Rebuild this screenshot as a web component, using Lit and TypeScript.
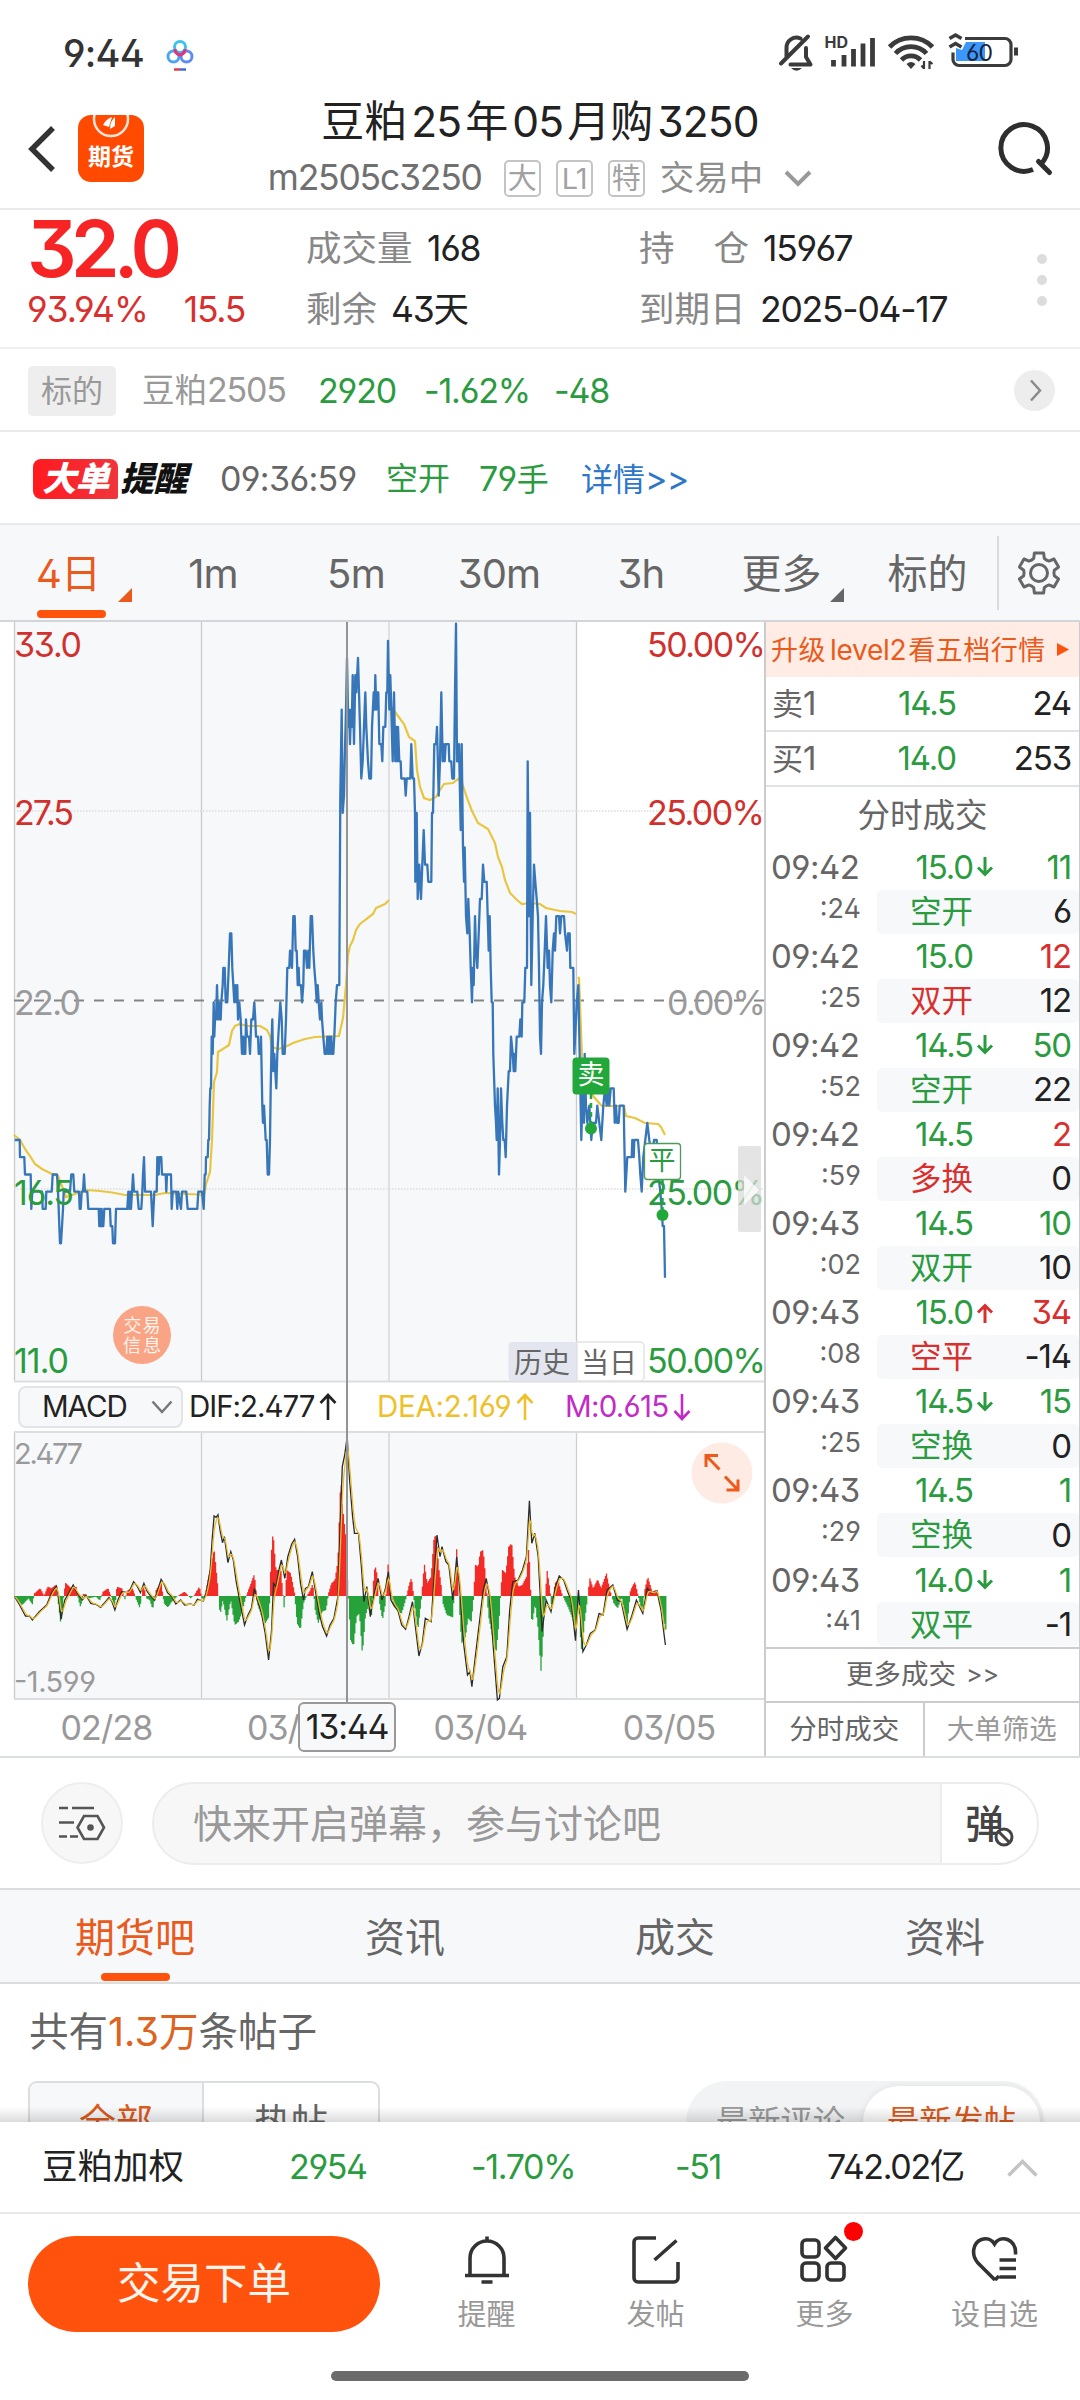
import { LitElement, html, svg, css } from "lit";
import { customElement } from "lit/decorators.js";
import { classMap } from "lit/directives/class-map.js";

/** Splits mixed text so that Latin runs and digits get their own tracking. */
const t = (s: string) =>
  s.split(/([\x20-\x7e]+)/).filter(Boolean).map((r) => (/^[\x20-\x7e]+$/.test(r) ? html`<span class="n">${r}</span>` : r));

const base = css`
  :host { display: block; box-sizing: border-box; font-family: Inter, "Noto Sans CJK SC", sans-serif; font-feature-settings: "cv09", "ss01"; line-height: 1; color: #222; white-space: nowrap; }
  * { box-sizing: border-box; }
  svg { display: block; overflow: visible; }
  .n { letter-spacing: -0.035em; }
  .red { color: #d8302f; }
  .green { color: #2b9b3f; }
  .dark { color: #222; }
`;

/* ---------- market data ---------- */

// x is in thirds of a pixel
const PRICES = `44,18 59,18 60,17.5 73,17.5 75,17 92,17 94,16 97,16.5 126,16.5 128,16 137,16 139,16.5 155,16.5 158,17 171,17 174,16.5 176,16 178,15.5 180,15 183,15 186,15.5 189,16 191,16.5 210,16.5 214,17 220,17 223,16.5 237,16.5 239,16 242,16 245,16.5 249,16.5 252,17 255,16.5 262,16.5 265,16 296,16 298,15.5 300,16 302,15.5 305,16 307,15.5 310,15.5 313,16 330,16 332,15.5 337,15.5 339,15 345,15 348,16 382,16 385,16.5 388,16 391,16.5 393,16 396,16.5 399,17 402,16.5 412,16.5 416,16 424,16 427,16.5 429,17 432,17.5 435,16.5 453,16.5 458,15.5 463,16.5 470,16.5 472,17.5 476,17 478,17.5 484,17.5 486,17 497,17 499,16.5 501,17 513,17 515,16 518,16.5 529,16.5 532,16 535,16.5 543,16 546,16.5 559,16.5 563,16 592,16 595,16.5 606,16.5 611,16 614,17 617,17 618,17.5 623,17.5 625,18 627,18 629,19 631,19.5 633,19.5 635,21 638,20.5 641,22 643,21 645,21.5 648,21.5 651,22.5 654,21.5 657,22 660,21.5 662,21.5 664,22 668,22.5 670,23 674,23 677,22 682,22 686,23 690,24 694,24 697,23 700,22.5 703,22 706,22.5 709,22 712,22.5 714,21.5 718,22 722,21.5 724,21 726,20.5 730,21 732,20.5 736,20.5 738,21.5 741,21 747,21 750,20.5 754,21.5 759,21.5 763,22 766,21.5 768,21 774,21 776,20.5 781,20.5 783,21 787,19 789,18.5 792,19 797,18 800,18 803,17 807,17 810,18 812,19.5 815,21 817,21.5 820,20 823,20.5 826,20 829,19.5 832,20.5 835,21 841,22 845,21.5 848,20.5 854,20.5 858,21.5 862,23 868,23 870,23.5 876,23 880,24.5 884,24.5 887,23.5 890,23.5 893,22.5 896,23 898,22.5 903,22.5 906,22 910,22.5 912,23.5 917,23.5 921,23 925,23.5 928,23 932,24.5 936,24.5 940,23.5 943,23 947,22.5 950,22 953,22.5 956,22 960,21.5 964,22 966,21.5 970,21 974,20.5 979,20.5 982,21 985,20.5 988,21 991,20.5 994,21 997,20.5 1000,20.5 1003,21 1007,22 1011,22.5 1018,22.5 1021,28 1025,30.5 1028,27.5 1032,28 1034,29 1038,30.5 1041,32 1045,30 1047,30.5 1050,29.5 1053,30.5 1055,30 1058,31.5 1062,29.5 1066,31.5 1069,31 1074,32 1077,31 1080,30 1084,28.5 1088,29 1092,30 1096,31 1099,30 1104,29 1108,28.5 1113,28.5 1116,30 1121,31 1124,30.5 1126,31.5 1129,30.5 1132,31 1135,31 1138,29.5 1144,29.5 1147,29 1150,30 1156,30 1159,31 1162,31 1164,32.5 1168,30.5 1171,31.5 1174,30.5 1178,29 1182,31 1186,29 1189,30 1192,29 1194,30 1198,29 1202,29 1204,28.5 1214,28.5 1217,28 1220,28.5 1231,28.5 1234,29.5 1238,28.5 1242,28.5 1245,27.5 1246,25.5 1250,27.5 1253,25 1258,26 1263,25 1267,26 1271,27 1275,26 1282,26 1285,25.5 1294,25.5 1296,27.5 1299,27.5 1303,29.5 1308,29.5 1311,30 1316,28 1320,29 1324,31 1328,29 1331,29.5 1334,29 1337,29.5 1346,29.5 1348,29 1354,29 1357,28.5 1362,28.5 1365,31 1368,33 1371,29 1374,29 1377,29.5 1382,27 1385,29.5 1389,26.5 1392,25.5 1394,26.5 1398,24.5 1402,24 1405,25 1409,24 1412,23 1416,22 1418,23 1421,22.5 1425,24.5 1428,23.5 1432,23 1436,24 1440,25 1445,25 1449,26 1453,25.5 1460,25.5 1463,24.5 1466,23.5 1469,24.5 1472,23 1475,22 1478,22 1480,20.5 1485,19 1488,18.5 1490,18 1493,19.5 1497,17 1500,18 1503,19.5 1507,18.5 1510,18 1514,18 1517,17.5 1521,19 1526,20 1530,20 1533,21 1538,20.5 1541,20 1544,20.5 1546,20 1550,21 1558,21 1561,21.5 1565,21 1567,22 1573,22 1576,23 1581,23 1583,29 1587,24.5 1590,27.5 1594,22.5 1598,24.5 1602,26 1606,25.5 1610,25 1614,24.5 1617,23 1620,21 1623,20.5 1626,22 1630,22.5 1634,23.5 1638,24.5 1643,23 1647,23.5 1650,22.5 1654,22 1658,23.5 1662,24 1665,23.5 1669,24.5 1677,24.5 1680,24 1684,24.5 1692,24.5 1695,24 1701,23.5 1704,24 1709,24 1711,23 1720,23 1723,20.5 1728,21.5 1730,22 1735,22.5 1740,20 1744,18 1748,19.5 1752,18.5 1754,20.5 1758,19 1762,18.5 1768,19 1774,18 1778,18.5 1788,18.5 1792,19 1798,18.5 1804,18 1810,19 1815,19.5 1820,19 1825,19.5 1828,19 1832,19.5 1841,19.5 1844,18.5 1848,19 1851,18.5 1856,18.5 1859,19 1871,19 1873,18 1876,16.5 1882,17.5 1895,17.5 1897,18 1901,17.5 1903,18 1914,18 1918,17.5 1921,17 1925,16.5 1930,17.5 1936,18 1942,18.5 1948,18 1955,17.5 1962,18 1970,18 1975,17 1981,16.5 1985,16 1988,15.5 1992,15.5 1995,14`;

const AVERAGES = [
  "14,1135 20,1140 25,1149 30,1156 35,1164 42,1169 52,1174 58,1176 62,1186 66,1197 75,1194 86,1190 100,1191 112,1192.5 125,1195 155,1195 165,1193 185,1194 201,1194.5",
  "201,1197 204,1195 206,1184 210,1172 212,1140 214,1082 217,1072 218,1052 223,1049 229,1045 232,1031 235,1026 240,1024 247,1026 260,1026 267,1030 270,1036 272,1047 278,1049 285,1047 293,1043 305,1039 315,1037 339,1036 343,1018 346,985 348,955 350,946 353,940 356,930 360,924 365,920 373,914 376,908 385,904 389,900",
  "390,706 395,712 404,724 409,737 415,741 417,770 420,787 424,798 430,800 436,797 440,790 444,784 453,783 458,779 462,783 467,798 472,811 478,823 488,829 495,843 498,857 502,867 505,880 510,893 517,900 522,904 530,903 540,904 546,908 560,911 572,912 576,914",
  "578,977 579,978 581,1030 582,1060 590,1090 594,1097 600,1104 602,1106 624,1106 626,1116 635,1118 645,1123 658,1124 661,1127 665,1135",
];

const DIF = `30,680 40,705 52,738 60,738 66,750 80,725 95,705 105,668 115,648 120,690 124,748 132,690 140,670 149,645 158,672 168,690 175,675 185,700 195,703 205,712 215,695 222,682 228,695 234,720 240,690 248,665 262,668 272,635 280,650 286,668 293,640 300,665 308,680 315,690 328,628 335,645 341,668 350,680 358,702 368,690 376,705 388,702 395,706 402,688 414,693 420,668 428,600 432,510 436,438 440,442 444,434 448,480 453,518 457,500 464,578 470,545 475,570 481,635 488,690 498,765 505,735 512,715 518,655 524,690 532,725 540,790 547,870 553,780 557,640 562,650 568,600 573,570 580,625 586,560 594,522 600,508 606,560 612,640 618,690 622,655 628,650 636,605 643,670 650,730 657,770 665,798 672,765 680,745 688,680 693,450 697,290 702,255 707,200 712,330 718,440 722,490 730,490 736,590 741,695 747,650 754,740 762,670 770,625 778,690 785,655 791,605 796,690 803,708 810,720 818,765 826,778 832,745 840,695 846,770 853,858 860,820 866,745 878,755 884,620 890,495 896,560 900,530 908,575 914,585 922,690 930,560 936,650 944,820 952,915 957,905 961,950 968,860 976,760 984,660 990,625 997,680 1005,840 1013,990 1017,985 1024,890 1032,860 1038,720 1044,635 1055,630 1064,600 1072,560 1078,392 1083,520 1089,490 1096,560 1104,785 1112,690 1122,725 1131,650 1139,618 1148,630 1156,665 1163,690 1172,812 1178,660 1187,845 1194,825 1202,790 1212,780 1220,730 1228,735 1236,660 1248,645 1257,690 1265,695 1277,778 1286,740 1296,690 1309,730 1318,655 1328,670 1338,662 1346,720 1355,825`;

const HIST = `30,682 45,705 58,685 66,703 70,670 82,655 90,678 97,650 105,655 113,645 118,690 124,765 129,690 133,638 145,655 155,650 160,690 164,712 170,670 180,685 196,680 203,692 210,665 220,655 228,685 234,712 238,650 248,655 254,690 260,660 270,655 278,690 285,715 292,640 298,685 305,690 311,718 318,660 328,635 334,700 342,712 350,695 360,680 376,665 388,685 396,675 406,650 412,690 418,672 428,600 436,535 444,655 448,735 454,690 462,752 470,690 478,765 486,755 494,720 500,685 506,660 518,612 524,700 532,735 540,760 548,740 552,560 556,485 562,600 572,600 579,720 584,600 592,610 600,670 605,760 612,778 618,700 624,680 632,660 637,640 642,720 648,760 656,725 664,720 669,670 675,640 682,630 688,575 694,320 697,400 704,500 708,640 710,690 714,810 720,828 726,740 732,730 738,855 744,740 750,705 756,745 762,600 766,590 772,690 779,750 785,700 790,578 794,650 800,700 810,725 818,730 826,690 834,640 838,622 844,700 851,780 858,690 864,580 870,640 878,620 884,500 888,498 894,600 898,640 902,700 910,735 922,742 927,620 930,535 935,700 940,820 948,800 953,745 960,755 964,690 968,585 974,590 978,545 984,540 990,640 995,740 1003,800 1010,850 1016,760 1020,660 1023,600 1030,610 1036,530 1042,520 1048,620 1056,650 1064,645 1072,620 1077,525 1080,640 1083,765 1090,700 1096,780 1102,910 1108,740 1114,600 1120,660 1124,720 1130,640 1136,630 1144,670 1150,690 1158,715 1166,745 1172,780 1178,665 1182,800 1185,850 1190,760 1196,690 1201,625 1208,655 1217,628 1224,655 1235,610 1242,660 1250,700 1258,715 1266,680 1277,770 1284,660 1293,635 1300,680 1308,725 1313,660 1319,620 1328,665 1336,660 1342,695 1350,735 1356,780`;

type Pt = [number, number];
const parse = (s: string): Pt[] => s.trim().split(/\s+/).map((p) => p.split(",").map(Number) as Pt);
const join = (p: Pt[]) => p.map(([x, y]) => `${x.toFixed(1)},${y.toFixed(1)}`).join(" ");

const pricePoints = join(parse(PRICES).map(([x, p]) => [x / 3, 1002.3 - (p - 22) * 34.43]));

const SX = 2.0364;
const ZERO = 1596;
const toPlot = (p: Pt[]): Pt[] => p.map(([x, y]) => [x / SX, 1370 + y / 3]);
const difPts = toPlot(parse(DIF));
const densify = (p: Pt[], step: number): Pt[] => {
  const out: Pt[] = [];
  let i = 0;
  for (let x = p[0][0]; x <= p[p.length - 1][0]; x += step) {
    while (i < p.length - 2 && p[i + 1][0] < x) i++;
    const [a, b] = [p[i], p[i + 1]];
    out.push([x, a[1] + ((b[1] - a[1]) * (x - a[0])) / (b[0] - a[0])]);
  }
  return out;
};
const deaPts: Pt[] = (() => {
  let v = difPts[0][1];
  return densify(difPts, 1).map(([x, y]) => [x, (v = v * 0.55 + y * 0.45)] as Pt);
})();
const bars = densify(toPlot(parse(HIST)), 1.04);
const barPath = (up: boolean) =>
  bars.filter(([, y]) => (up ? y < ZERO : y > ZERO)).map(([x, y]) => `M${x.toFixed(1)} ${ZERO}V${y.toFixed(1)}`).join("");

const DAYS = [201.5, 389, 576.5];

/* ---------- status bar and title ---------- */

@customElement("status-bar")
class StatusBar extends LitElement {
  static styles = [base, css`
    :host { height: 85px; display: flex; align-items: center; padding: 21px 57px 0 63px; }
    .time { font-size: 38px; font-weight: 500; color: #333; letter-spacing: -0.02em; }
    .app { margin-left: 18px; }
    .icons { margin-left: auto; }
  `];
  render() {
    return html`
      <span class="time">9:44</span>
      <svg class="app" width="36" height="36" viewBox="161 36 36 36" fill="none" stroke-width="3">
        <circle cx="179" cy="48" r="5.5" stroke="#3cc3ee" />
        <circle cx="172.500" cy="57.500" r="5.500" stroke="#4ba6f2" />
        <circle cx="185.500" cy="57.500" r="5.500" stroke="#5f8cf0" />
        <path d="M174 50q0 5 5 6q5-1 5-6" stroke="#e0357a" />
        <path d="M173 70.500h6" stroke="#e33b48" stroke-width="2.500" /><path d="M179 70.500h6" stroke="#3a6ce0" stroke-width="2.500" />
      </svg>
      <svg class="icons" width="245" height="44" viewBox="777 32 245 44" fill="none" stroke="#3b3b3b">
        <g stroke-width="4" stroke-linecap="round" stroke-linejoin="round">
          <path d="M785.500 59V49a10 10 0 0 1 14-9.500M805 49v9l4.500 7.500h-20M807 37.500L780 64.500" />
        </g>
        <path d="M790 69h11q-5.500 5.500-11 0z" fill="#3b3b3b" stroke="none" />
        <text x="823.500" y="48.500" font-size="16" font-weight="700" fill="#3b3b3b" stroke="none" textLength="23.500">HD</text>
        <path d="M832.500 61v6.500M843 56v11.500M852.500 50v17.500M862 44.500v23M871.500 39v28.500" stroke-width="4.800" />
        <g stroke-width="4.800">
          <path d="M888.500 48a30 30 0 0 1 43 0" /><path d="M894.500 54.500a21 21 0 0 1 31 0" /><path d="M900.500 61a13 13 0 0 1 19 0" />
        </g>
        <path d="M905.500 65q4.500-4 9 0l-4.500 5z" fill="#3b3b3b" stroke="none" />
        <path d="M923 62v8M928.500 70v-8M920.500 66.500l2.500 3M931.500 65l-3-2.500" stroke-width="2.200" />
        <path d="M964 39.500h40a6 6 0 0 1 6 6v15a6 6 0 0 1-6 6h-46a6 6 0 0 1-6-6v-7" stroke-width="3.200" />
        <path d="M965 43h19v19h-29v-13l6 2z" fill="#3b97fb" stroke="none" />
        <path d="M1015 48.500v8" stroke-width="4" />
        <path d="M948.500 39.500l6-3.500l6 3.500M948.500 48l6-3.500l6 3.500" stroke-width="3.600" />
        <text x="965" y="61.500" font-size="23" font-weight="400" fill="#16233c" stroke="none" textLength="27">60</text>
      </svg>`;
  }
}

@customElement("title-bar")
class TitleBar extends LitElement {
  static styles = [base, css`
    :host { height: 125px; display: grid; grid-template-columns: 160px 1fr 160px; border-bottom: 2px solid #eaeaea; }
    .left { display: flex; align-items: center; gap: 22px; padding: 2px 0 0 28px; }
    .left, .right { height: 125px; }
    .logo { width: 66px; height: 67px; border-radius: 13px; background: #ff4a00; overflow: hidden; display: flex; flex-direction: column; align-items: center; color: #fff; font-size: 23px; font-weight: 700; }
    .right { display: flex; align-items: center; justify-content: flex-end; padding: 2px 27px 0 0; }
    .mid { display: flex; flex-direction: column; align-items: center; padding-top: 13px; }
    .title { font-size: 43px; height: 46px; line-height: 46px; color: #222; padding-left: 4px; }
    .title .n { letter-spacing: -0.02em; font-size: 42.500px; margin: 0 4px; }
    .sub { display: flex; align-items: center; height: 40px; margin-top: 14px; color: #8e8e8e; font-size: 34.500px; }
    .code { font-size: 35.500px; color: #707070; margin-right: 22px; }
    .chip { width: 37px; height: 37px; border: 2px solid #c4c4c4; border-radius: 5px; font-size: 29px; color: #a2a2a2; margin-right: 15px; display: flex; align-items: center; justify-content: center; }
    .dd { margin-left: 21px; }
  `];
  render() {
    return html`
      <div class="left">
        <svg width="28" height="46" viewBox="0 0 28 46" fill="none" stroke="#333" stroke-width="5.500"><path d="M25 2L4 23l21 21" /></svg>
        <div class="logo">
          <svg width="40" height="31" viewBox="0 0 40 31"><circle cx="20" cy="4" r="17" fill="none" stroke="#fff" stroke-width="2.500" opacity=".85" /><path d="M12 10q3-6 9-8l-3 10zM19 14q0-8 5-12v9z" fill="#fff" /></svg>
          期货
        </div>
      </div>
      <div class="mid">
        <div class="title">${t("豆粕25年05月购3250")}</div>
        <div class="sub">
          <span class="code n">m2505c3250</span>
          <span class="chip">大</span><span class="chip n">L1</span><span class="chip">特</span>交易中
          <svg class="dd" width="28" height="18" viewBox="0 0 28 18" fill="none" stroke="#999" stroke-width="4"><path d="M2 3l12 12L26 3" /></svg>
        </div>
      </div>
      <div class="right">
        <svg width="54" height="54" viewBox="998 122 54 54" fill="none" stroke="#2e2e2e" stroke-width="5" stroke-linecap="round">
          <path d="M1032 169.500A23.300 23.300 0 1 1 1040.500 163.500" stroke-linecap="butt" /><path d="M1037.500 161.500l11 11" />
        </svg>
      </div>`;
  }
}

/* ---------- quote ---------- */

@customElement("quote-panel")
class QuotePanel extends LitElement {
  static styles = [base, css`
    .quote { height: 139px; display: grid; grid-template-columns: 306px 333px 1fr 78px; border-bottom: 2px solid #f0f0f0; font-size: 35.500px; }
    .price { padding: 4px 0 0 27px; color: #d8302f; }
    .big { font-size: 78px; line-height: 70px; font-weight: 600; color: #f62424; letter-spacing: -0.075em; }
    .chg { display: flex; gap: 36px; margin-top: 8px; line-height: 36px; }
    .chg .n:first-child { letter-spacing: -0.03em; }
    .col { display: flex; flex-direction: column; padding-top: 21px; gap: 25px; color: #888; }
    .line { display: flex; align-items: center; gap: 14px; height: 36px; }
    .k { display: flex; justify-content: space-between; min-width: 107px; }
    .k.s { min-width: 70px; }
    .k.w { min-width: 110px; }
    .dots { display: flex; flex-direction: column; gap: 11px; padding: 44px 0 0 35px; }
    .dots i { width: 10px; height: 10px; border-radius: 50%; background: #dcdcdc; }
    .under { height: 83px; display: grid; grid-template-columns: 114px 176px 106px 130px 1fr auto; align-items: center; padding: 2px 25px 0 28px; border-bottom: 2px solid #eaeaea; font-size: 32.500px; color: #999; }
    .badge { width: 88px; height: 50px; border-radius: 5px; background: #eee; display: flex; align-items: center; justify-content: center; font-size: 31px; }
    .under .n { font-size: 34px; }
    .alert { height: 93px; display: grid; grid-template-columns: 187px 166px 93px 102px 1fr; align-items: center; padding: 2px 0 0 33px; border-bottom: 2px solid #eaeaea; font-size: 32px; color: #666; }
    .alert .n { font-size: 34px; letter-spacing: -0.02em; }
    .link { color: #2f77c9; }
    .big-order { display: flex; align-items: center; font-size: 34px; font-weight: 900; font-style: italic; gap: 2px; letter-spacing: -0.5px; }
    .hot { width: 85px; height: 40px; border-radius: 8px 8px 2px 8px; background: linear-gradient(90deg, #ff1a1f, #f0353c); color: #fff; display: flex; align-items: center; justify-content: center; }
    .rem { color: #111; }
  `];
  render() {
    return html`
      <div class="quote">
        <div class="price"><div class="big">32.0</div><div class="chg"><span class="n">93.94%</span><span class="n">15.5</span></div></div>
        <div class="col">
          <div class="line"><span class="k">成交量</span><span class="dark n">168</span></div>
          <div class="line"><span class="k s">剩余</span><span class="dark">${t("43天")}</span></div>
        </div>
        <div class="col">
          <div class="line"><span class="k w"><span>持</span><span>仓</span></span><span class="dark n">15967</span></div>
          <div class="line"><span class="k">到期日</span><span class="dark n">2025-04-17</span></div>
        </div>
        <div class="dots"><i></i><i></i><i></i></div>
      </div>
      <div class="under">
        <span class="badge">标的</span><span>${t("豆粕2505")}</span><span class="green n">2920</span><span class="green n">-1.62%</span><span class="green n">-48</span>
        <svg width="41" height="41" viewBox="0 0 41 41"><circle cx="20.500" cy="20.500" r="20.500" fill="#ededed" /><path d="M17 10.500l9 10l-9 10" fill="none" stroke="#8a8a8a" stroke-width="2.500" /></svg>
      </div>
      <div class="alert">
        <span class="big-order"><span class="hot">大单</span><span class="rem">提醒</span></span>
        <span class="n">09:36:59</span><span class="green">空开</span><span class="green">${t("79手")}</span><span class="link">${t("详情>>")}</span>
      </div>`;
  }
}

@customElement("period-tabs")
class PeriodTabs extends LitElement {
  static styles = [base, css`
    :host { height: 97px; display: grid; grid-template-columns: 135px 156px 130px 156px 128px 153px 139px 1fr; align-items: center; background: #f7f8fa; border-bottom: 2px solid #d4d5d8; font-size: 40px; color: #666; }
    .tab { height: 95px; display: flex; align-items: center; justify-content: center; position: relative; padding-top: 3px; }
    .tab .n { letter-spacing: -0.02em; }
    .on { color: #ea5a1c; justify-content: flex-start; padding-left: 36px; }
    .on::before { content: ""; position: absolute; left: 37px; bottom: 2px; width: 69px; height: 8px; border-radius: 4px; background: #ff520d; }
    .tri::after { content: ""; position: absolute; right: 3px; bottom: 18px; border-style: solid; border-width: 0 0 14px 14px; border-color: transparent transparent currentColor transparent; }
    .more::after { right: 14px; }
    .set { height: 74px; border-left: 2px solid #d9dade; display: flex; align-items: center; justify-content: center; padding-right: 2px; }
  `];
  render() {
    const teeth = Array.from({ length: 6 }, (_, i) => i * 60);
    const d = teeth.map((a, i) => {
      const p = (r: number, deg: number) => `${(Math.sin((deg * Math.PI) / 180) * r).toFixed(1)} ${(-Math.cos((deg * Math.PI) / 180) * r).toFixed(1)}`;
      return `${i ? "L" : "M"}${p(20.5, a - 13)}L${p(20.5, a + 13)}L${p(15.5, a + 20)}Q${p(14.6, a + 30)} ${p(15.5, a + 40)}`;
    }).join("") + "Z";
    return html`
      <div class="tab on tri">${t("4日")}</div><div class="tab">${t("1m")}</div><div class="tab">${t("5m")}</div><div class="tab">${t("30m")}</div><div class="tab">${t("3h")}</div>
      <div class="tab tri more">更多</div><div class="tab">标的</div>
      <div class="set"><svg width="44" height="44" viewBox="-22 -22 44 44" fill="none" stroke="#666" stroke-width="3" stroke-linejoin="round"><path d=${d} /><circle r="8.500" /></svg></div>`;
  }
}

/* ---------- charts ---------- */

@customElement("chart-panel")
class ChartPanel extends LitElement {
  static styles = [base, css`
    :host { width: 764px; height: 1134px; display: flex; flex-direction: column; position: relative; }
    text { font-size: 34px; }
    .small { font-size: 29px; }
    .tag { font-size: 27px; }
    .info { font-size: 18px; }
    .switch { font-size: 28px; }
    .head { height: 49px; display: grid; grid-template-columns: 171px 188px 188px 1fr; align-items: center; padding-left: 18px; font-size: 29.500px; }
    .select { width: 165px; height: 42px; border: 2px solid #e2e4e8; border-radius: 8px; background: #f7f8fa; display: flex; align-items: center; justify-content: space-between; padding: 0 8px 0 22px; }
    .val { display: flex; align-items: center; gap: 5px; }
    .dea { color: #eec12c; }
    .dea .n { letter-spacing: -0.01em; }
    .m .n { letter-spacing: -0.025em; }
    .m { color: #c22cc6; }
    .dates { height: 56px; display: grid; grid-template-columns: 187px 187px 187px 1fr; padding-left: 13px; align-items: center; color: #999; font-size: 34px; }
    .dates span { text-align: center; letter-spacing: -0.025em; }
    .cross { position: absolute; left: 346px; top: 0; width: 2px; height: 1080px; background: #949494; }
    .stamp { position: absolute; left: 298px; top: 1080px; width: 98px; height: 50px; border: 2px solid #999; border-radius: 6px; background: #f7f8fa; display: flex; align-items: center; justify-content: center; font-size: 34px; color: #222; }
  `];
  arrow(up: boolean) {
    return html`<svg width="18" height="28" viewBox="0 0 18 28" fill="none" stroke="currentColor" stroke-width="2.600"><path d=${up ? "M9 27V2M1.500 10L9 2l7.500 8" : "M9 1v25M1.500 18L9 26l7.500-8"} /></svg>`;
  }
  render() {
    return html`
      <svg width="764" height="760" viewBox="0 622 764 760">
        <path d="M14 622H576.500V1381H14z" fill="#f7f8fa" />
        <path d="M14.500 622V1381M201.500 622V1381M576.500 622V1381" stroke="#c9cacc" stroke-width="1.300" />
        <path d="M389 622V1381" stroke="#dfe0e2" stroke-width="2" />
        <path d="M14 811H764M14 1189H764" stroke="#dcdcde" stroke-dasharray="1.500 1.500" stroke-width="1.500" />
        <path d="M14 1381.500H764" stroke="#dcdddf" stroke-width="2" />
        <path d="M14 1000.500H764" stroke="#858585" stroke-width="2" stroke-dasharray="10 10" />
        ${AVERAGES.map((p) => svg`<polyline points=${p} fill="none" stroke="#e9c640" stroke-width="2.200" />`)}
        <polyline points=${pricePoints} fill="none" stroke="#3776b8" stroke-width="2.300" stroke-linejoin="round" />
        <g fill="#d0312d">
          <text x="14" y="657" textLength="68">33.0</text><text x="14" y="825" textLength="60">27.5</text>
          <text x="647" y="657" textLength="119">50.00%</text><text x="647" y="825" textLength="118">25.00%</text>
        </g>
        <g fill="#9a9a9a"><text x="14" y="1015" textLength="67">22.0</text><text x="667" y="1015" textLength="99">0.00%</text></g>
        <g fill="#2b9b3f">
          <text x="14" y="1205" textLength="60">16.5</text><text x="14" y="1373" textLength="55">11.0</text>
          <text x="647" y="1205" textLength="118">25.00%</text><text x="647" y="1373" textLength="119">50.00%</text>
        </g>
        <g fill="#22a73a">
          <path d="M591 1094v32" stroke="#22a73a" stroke-width="2.500" stroke-dasharray="5 4" /><circle cx="591" cy="1128.500" r="6" />
          <rect x="572.500" y="1057.500" width="37" height="37" rx="4" />
          <path d="M662.500 1180v32" stroke="#22a73a" stroke-width="2.500" stroke-dasharray="5 4" /><circle cx="662.500" cy="1215" r="6" />
          <rect x="644.500" y="1143.500" width="36" height="36" rx="3" fill="#fff" stroke="#4d9a5c" stroke-width="1.300" />
        </g>
        <text class="tag" x="591" y="1083.500" text-anchor="middle" fill="#fff">卖</text>
        <text class="tag" x="662" y="1169.500" text-anchor="middle" fill="#2b9b3f">平</text>
        <rect x="738" y="1146" width="23" height="86" rx="2" fill="#dadada" fill-opacity=".72" /><path d="M744 1175l15 15l-15 15z" fill="#fff" fill-opacity=".75" />
        <circle cx="142" cy="1335" r="29" fill="#f9a484" />
        <text class="info" x="142" y="1332" text-anchor="middle" fill="#fff3ec" textLength="37">交易</text>
        <text class="info" x="142" y="1352" text-anchor="middle" fill="#fff3ec" textLength="38">信息</text>
        <path d="M576.500 1342h-64a4 4 0 0 0-4 4v31a4 4 0 0 0 4 4h64z" fill="#e3e6ee" />
        <path d="M577 1342h63a4 4 0 0 1 4 4v31a4 4 0 0 1-4 4h-63z" fill="#fff" stroke="#e2e3e6" stroke-width="1.500" />
        <text class="switch" x="542" y="1373" text-anchor="middle" fill="#666">历史</text>
        <text class="switch" x="609" y="1373" text-anchor="middle" fill="#666">当日</text>
      </svg>
      <div class="head">
        <div class="select"><span class="n">MACD</span><svg width="22" height="14" viewBox="0 0 22 14" fill="none" stroke="#777" stroke-width="2.500"><path d="M1.500 1.500L11 12l9.500-10.500" /></svg></div>
        <span class="val"><span class="n">DIF:2.477</span>${this.arrow(true)}</span>
        <span class="val dea"><span class="n">DEA:2.169</span>${this.arrow(true)}</span>
        <span class="val m"><span class="n">M:0.615</span>${this.arrow(false)}</span>
      </div>
      <svg width="764" height="269" viewBox="0 1431 764 269">
        <path d="M14 1432H576.500V1699H14z" fill="#f7f8fa" />
        ${DAYS.map((x) => svg`<path d="M${x} 1432V1699" stroke="#cfd0d2" stroke-width="1.300" />`)}
        <path d="M14.500 1432V1699" stroke="#c9cacc" stroke-width="1.300" />
        <path d="M14 1432H764M14 1699H764" stroke="#dcdddf" stroke-width="2" />
        <path d=${barPath(true)} stroke="#f32a25" stroke-width="1.300" /><path d=${barPath(false)} stroke="#27a23b" stroke-width="1.300" />
        <polyline points=${join(difPts)} fill="none" stroke="#2c2c2c" stroke-width="1.300" />
        <polyline points=${join(deaPts)} fill="none" stroke="#e8bd30" stroke-width="1.300" />
        <text class="small" x="14" y="1464" fill="#9a9a9a" textLength="69">2.477</text><text class="small" x="14" y="1692" fill="#9a9a9a" textLength="82">-1.599</text>
        <circle cx="722" cy="1473" r="30.500" fill="#feece4" />
        <path d="M706 1467v-11.500h12M707 1456.500l12.500 13M738 1479.500v10.500h-11.500M737 1489l-12-12.500" fill="none" stroke="#ee5a1c" stroke-width="3" />
      </svg>
      <div class="dates"><span>02/28</span><span>03/03</span><span>03/04</span><span>03/05</span></div>
      <div class="cross"></div>
      <div class="stamp"><span class="n">13:44</span></div>`;
  }
}

/* ---------- ticks ---------- */

interface Tick { hm: string; s: string; p: string; dir: "" | "up" | "down"; vol: number; red: boolean; kind: string; oi: number }
const TICKS: Tick[] = [
  { hm: "09:42", s: ":24", p: "15.0", dir: "down", vol: 11, red: false, kind: "空开", oi: 6 },
  { hm: "09:42", s: ":25", p: "15.0", dir: "", vol: 12, red: true, kind: "双开", oi: 12 },
  { hm: "09:42", s: ":52", p: "14.5", dir: "down", vol: 50, red: false, kind: "空开", oi: 22 },
  { hm: "09:42", s: ":59", p: "14.5", dir: "", vol: 2, red: true, kind: "多换", oi: 0 },
  { hm: "09:43", s: ":02", p: "14.5", dir: "", vol: 10, red: false, kind: "双开", oi: 10 },
  { hm: "09:43", s: ":08", p: "15.0", dir: "up", vol: 34, red: true, kind: "空平", oi: -14 },
  { hm: "09:43", s: ":25", p: "14.5", dir: "down", vol: 15, red: false, kind: "空换", oi: 0 },
  { hm: "09:43", s: ":29", p: "14.5", dir: "", vol: 1, red: false, kind: "空换", oi: 0 },
  { hm: "09:43", s: ":41", p: "14.0", dir: "down", vol: 1, red: false, kind: "双平", oi: -1 },
];

@customElement("tick-panel")
class TickPanel extends LitElement {
  static styles = [base, css`
    :host { width: 316px; height: 1134px; border-left: 2px solid #cbccce; border-right: 1px solid #cbccce; display: flex; flex-direction: column; font-size: 31px; color: #666; }
    .up { height: 55px; background: #ffece4; color: #e95a1d; font-size: 27px; display: flex; align-items: center; justify-content: space-between; padding: 0 10px 0 5px; letter-spacing: 0.5px; }
    .up .n { letter-spacing: -0.01em; margin: 0 2px 0 4px; font-size: 28px; }
    .lv { height: 55px; display: grid; grid-template-columns: 100px 84px 1fr; align-items: center; padding: 0 8px 0 6px; border-bottom: 2px solid #e2e3e5; }
    .lv .n, .tick .n { font-size: 33px; }
    .r { text-align: right; }
    .ttl { height: 58px; display: flex; align-items: center; justify-content: center; font-size: 32.500px; }
    .tick { height: 89.100px; display: grid; grid-template-columns: 111px 1fr; grid-template-rows: 44.500px 44px; }
    .hm { padding-left: 5px; align-self: center; }
    .hm .n { letter-spacing: -0.015em; }
    .tick .s { font-size: 27px; align-self: center; text-align: right; padding: 0 16px 7px 0; letter-spacing: 0; }
    .a, .b { display: grid; grid-template-columns: 96px 24px 1fr; align-items: center; padding-right: 8px; }
    .b { background: #f7f8fa; border-radius: 5px; font-size: 31.500px; }
    .bottom { border-top: 2px solid #cbccce; height: 54px; display: flex; align-items: center; justify-content: center; font-size: 27.500px; }
    .tabs { flex: 1; border-top: 2px solid #cbccce; display: grid; grid-template-columns: 1fr 1fr; font-size: 27.500px; }
    .tabs span { display: flex; align-items: center; justify-content: center; }
    .tabs .off { color: #999; border-left: 2px solid #cbccce; }
    .bottom .n { margin-left: 10px; letter-spacing: 0; font-size: 25px; }
  `];
  render() {
    return html`
      <div class="up"><span>${t("升级level2看五档行情")}</span><svg width="12" height="13" viewBox="0 0 12 13"><path d="M0 0l12 6.500l-12 6.500z" fill="#ff520d" /></svg></div>
      <div class="lv"><span>${t("卖1")}</span><span class="green r n">14.5</span><span class="dark r n">24</span></div>
      <div class="lv"><span>${t("买1")}</span><span class="green r n">14.0</span><span class="dark r n">253</span></div>
      <div class="ttl">分时成交</div>
      ${TICKS.map((k) => html`
        <div class="tick">
          <span class="hm">${t(k.hm)}</span>
          <div class="a">
            <span class="green r n">${k.p}</span>
            <span class=${classMap({ red: k.dir === "up", green: k.dir === "down" })}>${k.dir ? html`<svg width="23" height="20" viewBox="0 0 23 20" fill="none" stroke="currentColor" stroke-width="3"><path d=${k.dir === "up" ? "M12 20V3M5 9.500L12 2.500l7 7" : "M12 0v17M5 10.500l7 7l7-7"} /></svg>` : ""}</span>
            <span class=${classMap({ r: true, n: true, red: k.red, green: !k.red })}>${k.vol}</span>
          </div>
          <span class="s n">${k.s}</span>
          <div class="b"><span class=${classMap({ r: true, red: k.red, green: !k.red })}>${k.kind}</span><span></span><span class="dark r n">${k.oi}</span></div>
        </div>`)}
      <div class="bottom">更多成交<span class="n">&gt;&gt;</span></div>
      <div class="tabs"><span>分时成交</span><span class="off">大单筛选</span></div>`;
  }
}

/* ---------- community ---------- */

@customElement("community-panel")
class CommunityPanel extends LitElement {
  static styles = [base, css`
    :host { border-top: 2px solid #dcddde; }
    .talk { height: 130px; display: flex; align-items: center; padding: 0 41px 0 41px; gap: 29px; }
    .round { width: 82px; height: 82px; border-radius: 50%; border: 2px solid #eee; background: #f7f7f8; display: flex; align-items: center; justify-content: center; }
    .box { flex: 1; height: 83px; border: 2px solid #ececec; border-radius: 42px; background: #f7f7f8; display: flex; align-items: center; overflow: hidden; font-size: 39px; color: #999; padding-left: 39px; }
    .dm { margin-left: auto; width: 97px; height: 100%; background: #fff; border-left: 2px solid #ececec; display: flex; align-items: center; padding-left: 23px; font-size: 39px; font-weight: 500; color: #444; position: relative; }
    .dm svg { position: absolute; left: 51px; top: 42px; }
    .tabs { height: 96px; background: #f7f8fa; border-top: 2px solid #dcddde; border-bottom: 2px solid #dcddde; display: grid; grid-template-columns: repeat(4, 1fr); font-size: 40px; color: #666; }
    .tabs span { display: flex; align-items: center; justify-content: center; padding-top: 3px; position: relative; }
    .tabs .on { color: #ea5a1c; }
    .on::after { content: ""; position: absolute; left: 50%; margin-left: -34px; bottom: 1px; width: 69px; height: 8px; border-radius: 4px; background: #ff520d; }
    .count { height: 97px; display: flex; align-items: center; padding-left: 29px; font-size: 39.500px; color: #666; }
    .count b { font-weight: 400; color: #dc6420; }
    .count .n { letter-spacing: 0; }
    .filters { height: 41px; overflow: hidden; display: flex; justify-content: space-between; padding: 0 36px 0 28px; position: relative; }
    .seg { width: 352px; height: 82px; border: 2px solid #dcdddf; border-radius: 9px; display: grid; grid-template-columns: 1fr 1fr; overflow: hidden; font-size: 37px; color: #666; }
    .seg span, .sort span { display: flex; align-items: center; justify-content: center; }
    .seg span:first-child { background: #f7f8fa; color: #dc5a1c; border-right: 2px solid #dcdddf; }
    .sort { width: 358px; height: 82px; border-radius: 41px; background: #f2f3f5; display: grid; grid-template-columns: 1fr 177px; padding: 5px 4px 5px 12px; font-size: 32.300px; color: #999; }
    .sort .cur { background: #fff; border-radius: 36px; color: #dc5a1c; box-shadow: 0 0 8px rgba(0, 0, 0, .08); }
    .filters::after { content: ""; position: absolute; left: 0; right: 0; bottom: 0; height: 15px; background: linear-gradient(rgba(0, 0, 0, 0), rgba(0, 0, 0, .14)); }
  `];
  render() {
    return html`
      <div class="talk">
        <span class="round"><svg width="48" height="36" viewBox="0 0 48 36" fill="none" stroke="#555" stroke-width="2.600"><path d="M1 3h9M14 3h22M1 17.500h15M1 31.500h8M12 31.500h8M26 11h13.500l6.500 11.500l-6.500 11.500h-13.500l-6.500-11.500z" /><circle cx="32.500" cy="22.500" r="2" fill="#555" /></svg></span>
        <div class="box">快来开启弹幕，参与讨论吧<span class="dm">弹<svg width="22" height="22" viewBox="0 0 22 22"><circle cx="11" cy="11" r="8" fill="#fff" stroke="#444" stroke-width="3" /><path d="M6 6l10 10" stroke="#444" stroke-width="3" /></svg></span></div>
      </div>
      <div class="tabs"><span class="on">期货吧</span><span>资讯</span><span>成交</span><span>资料</span></div>
      <div class="count"><span>共有<b>${t("1.3")}万</b>条帖子</span></div>
      <div class="filters">
        <div class="seg"><span>全部</span><span>热帖</span></div>
        <div class="sort"><span>最新评论</span><span class="cur">最新发帖</span></div>
      </div>`;
  }
}

/* ---------- bottom ---------- */

@customElement("bottom-bar")
class BottomBar extends LitElement {
  static styles = [base, css`
    :host { background: #fff; }
    .index { height: 92px; display: grid; grid-template-columns: 247px 182px 204px 152px 180px 1fr; align-items: center; padding-left: 42px; border-bottom: 2px solid #eaeaea; font-size: 35.500px; }
    .index .n { font-size: 34px; letter-spacing: -0.04em; }
    .actions { height: 157px; display: grid; grid-template-columns: 402px 169px 169px 169px 171px; }
    .buy { margin: 22px 0 0 28px; width: 352px; height: 96px; border-radius: 48px; background: #ff520d; color: #fff5ee; font-size: 43.500px; display: flex; align-items: center; justify-content: center; }
    .act { display: flex; flex-direction: column; align-items: center; padding-top: 20px; font-size: 29px; color: #999; gap: 16px; position: relative; }
    .dot { position: absolute; left: 104px; top: 8px; width: 19px; height: 19px; border-radius: 50%; background: #f00; }
    .home { margin: 0 auto; width: 418px; height: 10px; border-radius: 5px; background: #6b6b6b; }
  `];
  render() {
    const icon = (c: unknown) => html`<svg width="50" height="50" viewBox="0 0 50 50" fill="none" stroke="#333" stroke-width="3.600">${c}</svg>`;
    return html`
      <div class="index">
        <span>豆粕加权</span><span class="green n">2954</span><span class="green n">-1.70%</span><span class="green n">-51</span><span>${t("742.02亿")}</span>
        <svg width="31" height="19" viewBox="0 0 31 19" fill="none" stroke="#c4c4c4" stroke-width="3.600"><path d="M1.500 17.500l14-14l14 14" /></svg>
      </div>
      <div class="actions">
        <div class="buy">交易下单</div>
        <div class="act">${icon(svg`<path d="M3 41.500h44M8 41.500V24a17 17 0 0 1 34 0v17.500M25 2.500v5M19.500 48h11" />`)}提醒</div>
        <div class="act">${icon(svg`<path d="M25 4H7a4 4 0 0 0-4 4v36a4 4 0 0 0 4 4h36a4 4 0 0 0 4-4V28M23.500 26L45.500 6.500" />`)}发帖</div>
        <div class="act">${icon(svg`<rect x="2" y="6" width="17" height="17" rx="4" /><rect x="2" y="29" width="17" height="17" rx="4" /><rect x="27" y="29" width="17" height="17" rx="4" /><path d="M35.500 3.500l10 10.500l-10 10.500l-10-10.500z" stroke-linejoin="round" />`)}<i class="dot"></i>更多</div>
        <div class="act">${icon(svg`<path d="M25 46L8 29C1 21 2.500 9 11.500 5.500C17 3.500 22 6 24.500 10C27 6 32 3.500 37.500 5.500C43.500 8 46 13 45.500 20.500M25 46l4-4M29.500 26H46M29.500 34.500H46M29.500 43H46" />`)}设自选</div>
      </div>
      <div class="home"></div>`;
  }
}

@customElement("app-root")
class AppRoot extends LitElement {
  static styles = [base, css`
    :host { width: 1080px; height: 2400px; background: #fff; overflow: hidden; display: flex; flex-direction: column; }
    .main { display: flex; height: 1134px; }
    .main > * { flex: none; }
    .grow { flex: 1; }
  `];
  render() {
    return html`
      <status-bar></status-bar>
      <title-bar></title-bar>
      <quote-panel></quote-panel>
      <period-tabs></period-tabs>
      <div class="main"><chart-panel></chart-panel><tick-panel></tick-panel></div>
      <community-panel></community-panel>
      <bottom-bar class="grow"></bottom-bar>`;
  }
}
